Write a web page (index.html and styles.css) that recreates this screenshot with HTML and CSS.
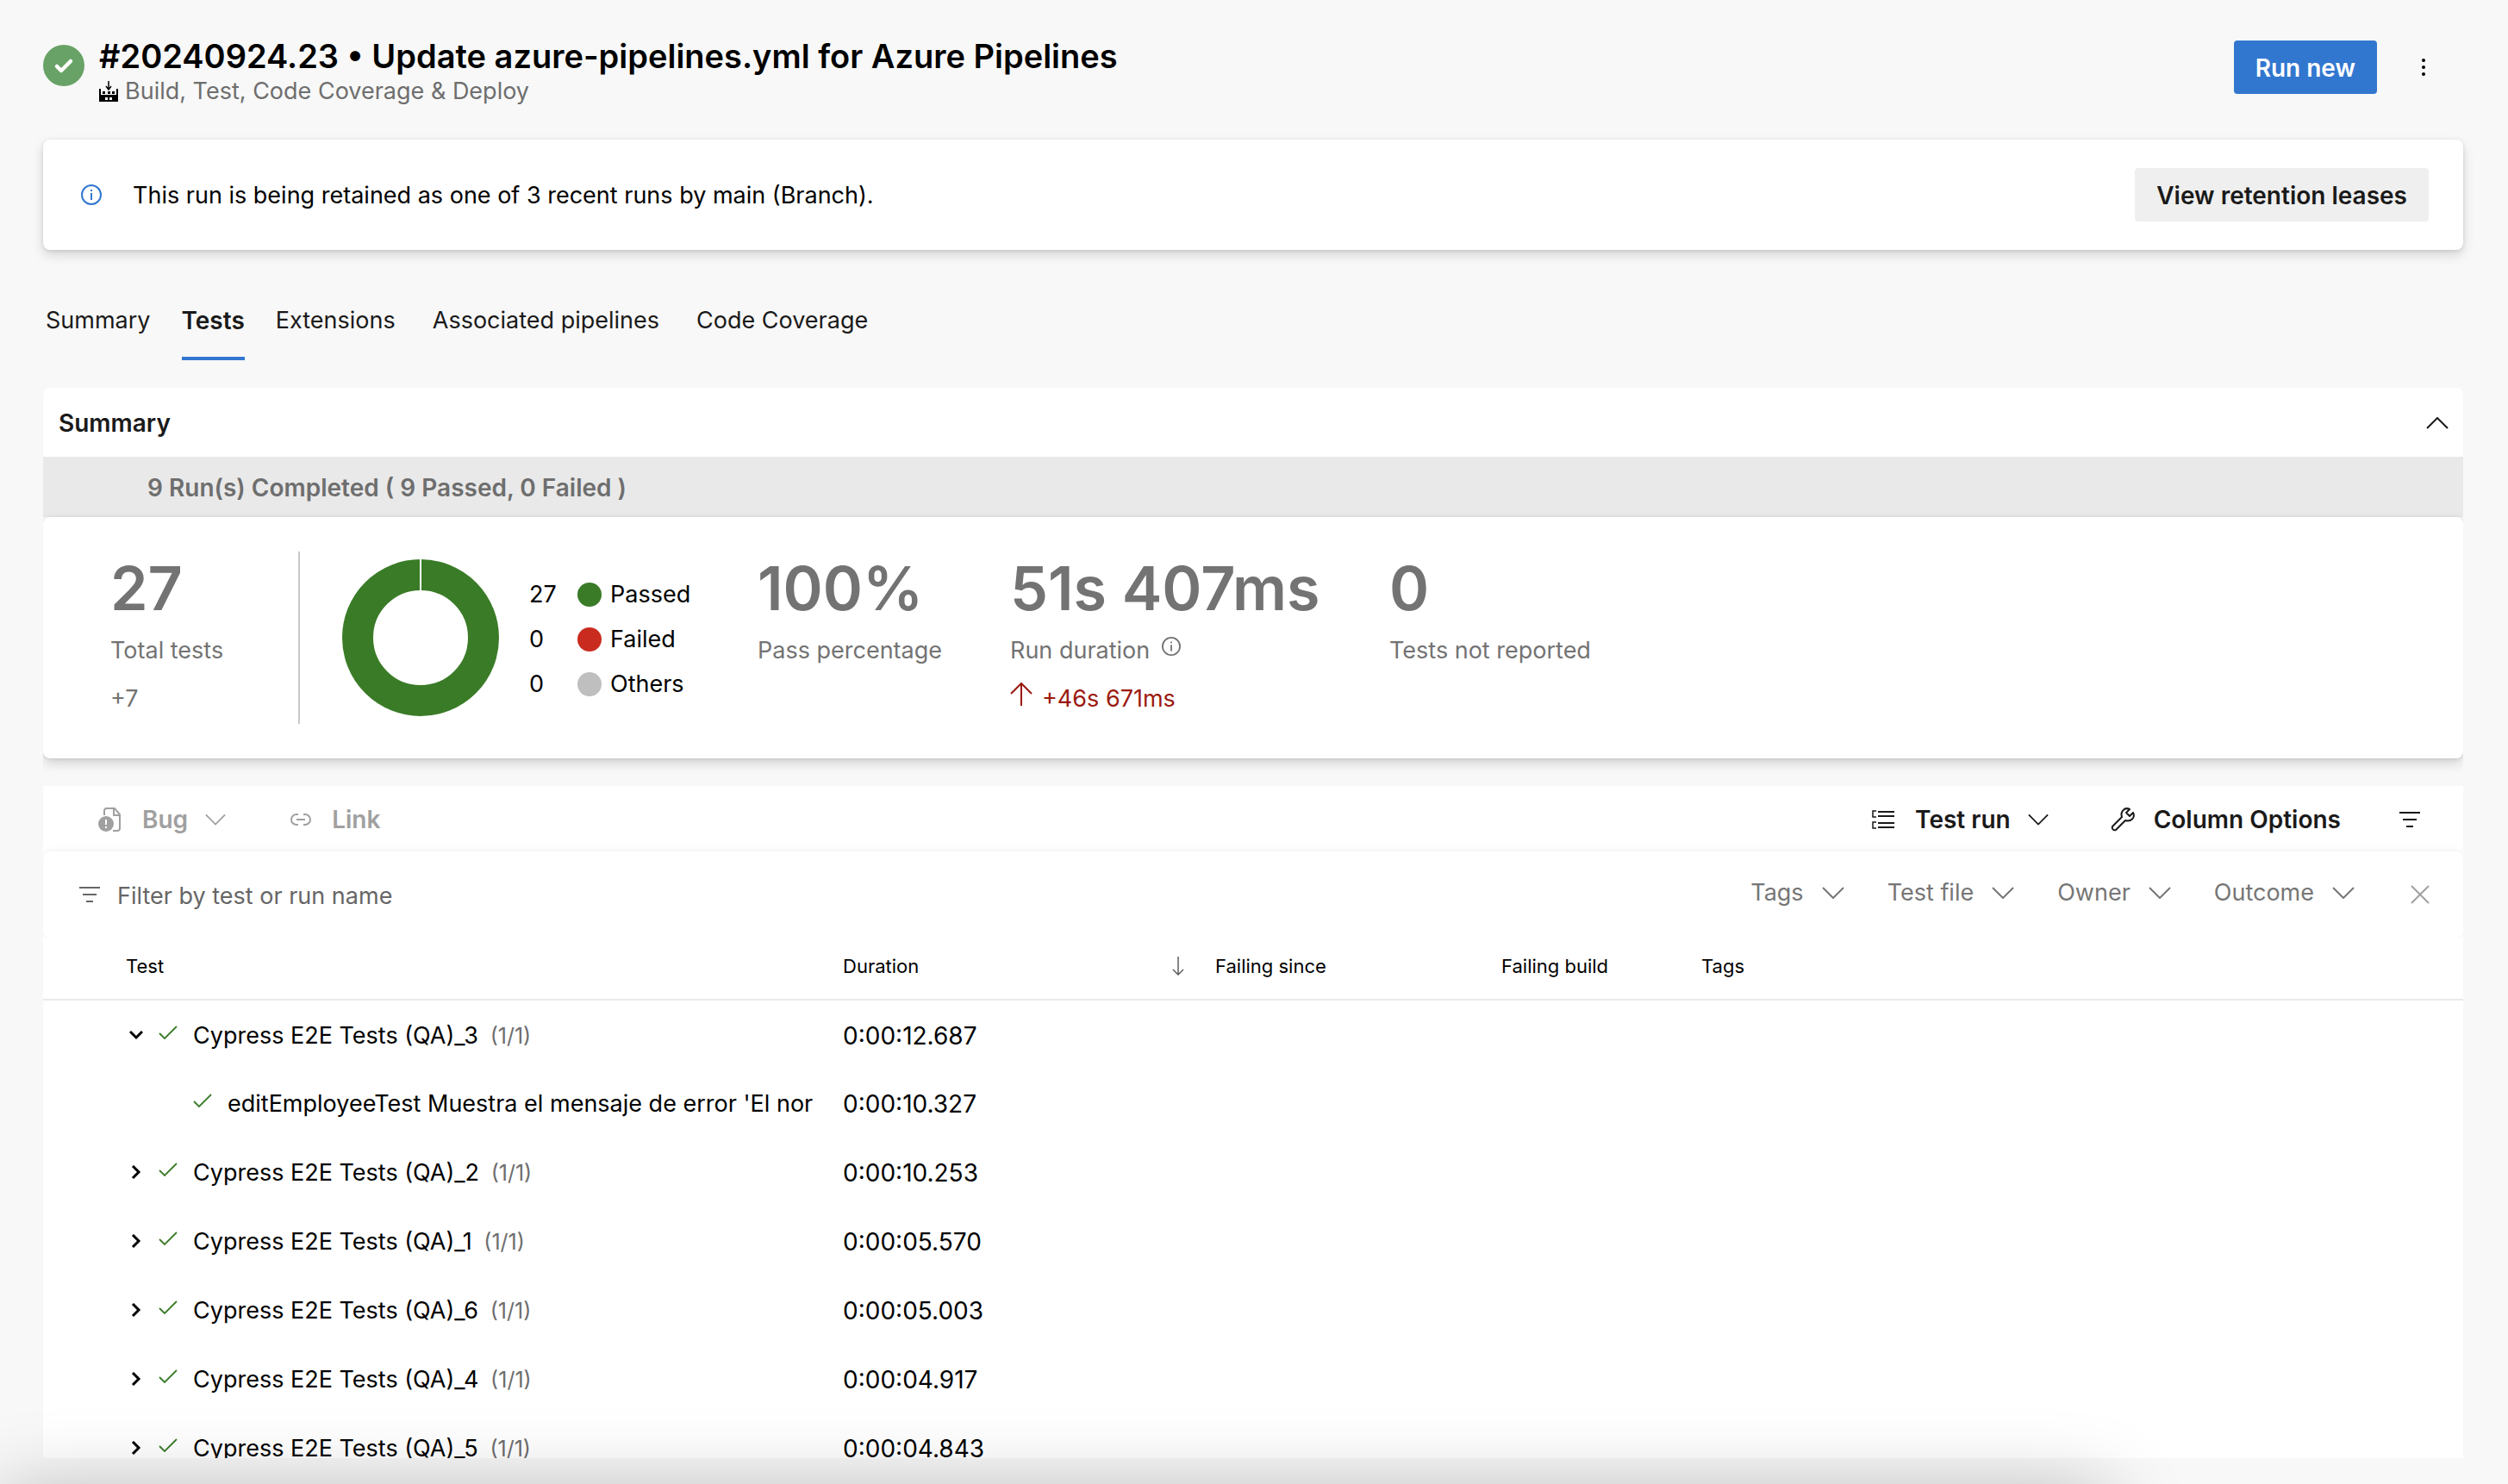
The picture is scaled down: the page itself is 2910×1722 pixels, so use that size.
FILE: index.html
```html
<!DOCTYPE html>
<html lang="en">
<head>
<meta charset="utf-8">
<title>#20240924.23 - Tests</title>
<link rel="stylesheet" href="styles.css">
</head>
<body>
<svg class="defs" aria-hidden="true">
  <defs>
    <symbol id="chev-down" viewBox="0 0 26 14"><path d="M1 1l12 12L25 1" fill="none" stroke="currentColor" stroke-width="2"/></symbol>
    <symbol id="chev-up" viewBox="0 0 26 14"><path d="M1 13L13 1l12 12" fill="none" stroke="currentColor" stroke-width="2"/></symbol>
    <symbol id="caret-right" viewBox="0 0 16 16"><path d="M4 1l7 7-7 7" fill="none" stroke="currentColor" stroke-width="3"/></symbol>
    <symbol id="caret-down" viewBox="0 0 16 16"><path d="M1 4l7 7 7-7" fill="none" stroke="currentColor" stroke-width="3"/></symbol>
    <symbol id="tick" viewBox="0 0 22 16"><path d="M1 9l6 6L21 1" fill="none" stroke="currentColor" stroke-width="1.8"/></symbol>
    <symbol id="info" viewBox="0 0 24 24"><circle cx="12" cy="12" r="11" fill="none" stroke="currentColor" stroke-width="2"/><path d="M12 10v8M12 6v2" stroke="currentColor" stroke-width="2"/></symbol>
    <symbol id="filter" viewBox="0 0 24 20"><path d="M0 2h24M4 10h16M8 18h8" stroke="currentColor" stroke-width="2"/></symbol>
  </defs>
</svg>

<header class="page-head">
  <svg class="status" viewBox="0 0 48 48" role="img" aria-label="Succeeded"><circle cx="24" cy="24" r="24" fill="#68a267"/><path d="M16 25l5 5 11-11" fill="none" stroke="#fff" stroke-width="4.5" stroke-linecap="round" stroke-linejoin="round"/></svg>
  <div class="head-text">
    <h1>#20240924.23 • Update azure-pipelines.yml for Azure Pipelines</h1>
    <p class="pipeline">
      <svg class="factory" viewBox="0 0 22 24" aria-hidden="true"><path d="M11 0v9M8 6l3 4 3-4" fill="none" stroke="#000" stroke-width="1.5"/><path d="M0 9h2v7h18V9h2v15H0zM4 12h3v3H4zM10 12h3v3h-3zM15 12h3v3h-3z" fill="#000"/><path d="M7 19h3v3H7zM12 19h3v3h-3z" fill="#f8f8f8"/></svg>
      <span>Build, Test, Code Coverage &amp; Deploy</span>
    </p>
  </div>
  <button class="btn primary" type="button">Run new</button>
  <button class="more" type="button" aria-label="More actions"><svg viewBox="0 0 4 20"><circle cx="2" cy="2" r="2"/><circle cx="2" cy="10" r="2"/><circle cx="2" cy="18" r="2"/></svg></button>
</header>

<main>
  <section class="card notice">
    <svg class="info-blue" aria-hidden="true"><use href="#info"/></svg>
    <p>This run is being retained as one of 3 recent runs by main (Branch).</p>
    <button class="btn" type="button">View retention leases</button>
  </section>

  <nav class="tabs">
    <a href="#summary">Summary</a>
    <a href="#tests" class="active" aria-current="page">Tests</a>
    <a href="#extensions">Extensions</a>
    <a href="#associated">Associated pipelines</a>
    <a href="#coverage">Code Coverage</a>
  </nav>

  <section class="summary">
    <div class="summary-head">
      <h2>Summary</h2>
      <button class="icon-btn" type="button" aria-label="Collapse summary"><svg class="chev"><use href="#chev-up"/></svg></button>
    </div>
    <div class="runs-bar">9 Run(s) Completed ( 9 Passed, 0 Failed )</div>
    <div class="card stats">
      <div class="stat total">
        <strong>27</strong>
        <span class="label">Total tests</span>
        <span class="delta">+7</span>
      </div>
      <div class="outcome">
        <svg class="donut" viewBox="0 0 182 182" role="img" aria-label="27 of 27 passed"><circle cx="91" cy="91" r="73" fill="none" stroke="#3a7b27" stroke-width="36"/><path d="M91 0v37" stroke="#fff" stroke-width="2"/></svg>
        <ul class="legend">
          <li><span>27</span><i class="dot passed"></i>Passed</li>
          <li><span>0</span><i class="dot failed"></i>Failed</li>
          <li><span>0</span><i class="dot others"></i>Others</li>
        </ul>
      </div>
      <div class="stat percent">
        <strong>100%</strong>
        <span class="label">Pass percentage</span>
      </div>
      <div class="stat duration">
        <strong>51s 407ms</strong>
        <span class="label">Run duration <svg class="info-grey" aria-hidden="true"><use href="#info"/></svg></span>
        <span class="delta worse"><svg viewBox="0 0 26 28" aria-hidden="true"><path d="M13 28V2M1 14L13 2l12 12" fill="none" stroke="currentColor" stroke-width="2"/></svg>+46s 671ms</span>
      </div>
      <div class="stat">
        <strong>0</strong>
        <span class="label">Tests not reported</span>
      </div>
    </div>
  </section>

  <section class="results">
    <div class="toolbar">
      <button class="tool" type="button" disabled>
        <svg class="i-bug" viewBox="0 0 28 28" aria-hidden="true"><path d="M8 9V4q0-3 3-3h9l6 7v16q0 3-3 3h-5M19 1v8h7" fill="none" stroke="currentColor" stroke-width="2"/><circle cx="10" cy="19" r="9" fill="currentColor"/><path d="M10 14v6M10 22v2" stroke="#fff" stroke-width="2"/></svg>
        Bug
        <svg class="chev"><use href="#chev-down"/></svg>
      </button>
      <button class="tool link" type="button" disabled>
        <svg class="i-link" viewBox="0 0 24 14" aria-hidden="true"><path d="M9 1H7a6 6 0 0 0 0 12h2M15 1h2a6 6 0 0 1 0 12h-2M7 7h10" fill="none" stroke="currentColor" stroke-width="2"/></svg>
        Link
      </button>
      <span class="spacer"></span>
      <button class="tool" type="button">
        <svg class="i-group" viewBox="0 0 26 22" aria-hidden="true"><path d="M7 2h19M7 7h19M7 15h19M7 20h19" stroke="currentColor" stroke-width="2"/><path d="M5 1H1v7h4M5 14H1v7h4" fill="none" stroke="currentColor" stroke-width="1.5"/></svg>
        Test run
        <svg class="chev"><use href="#chev-down"/></svg>
      </button>
      <button class="tool columns" type="button">
        <svg class="i-wrench" viewBox="0 0 28 28" aria-hidden="true"><path d="M22 2C16-1 11 5 13 11L2 22a3 3 0 0 0 4 4L17 15c6 2 12-3 9-9l-4 4-4-4z" fill="none" stroke="currentColor" stroke-width="2" stroke-linejoin="round"/></svg>
        Column Options
      </button>
      <button class="icon-btn filter-btn" type="button" aria-label="Toggle filter"><svg class="i-filter"><use href="#filter"/></svg></button>
    </div>

    <div class="filterbar">
      <label class="search" for="q"><svg class="i-filter"><use href="#filter"/></svg></label>
      <input id="q" type="text" placeholder="Filter by test or run name" aria-label="Filter by test or run name">
      <button class="drop" type="button">Tags<svg class="chev"><use href="#chev-down"/></svg></button>
      <button class="drop" type="button">Test file<svg class="chev"><use href="#chev-down"/></svg></button>
      <button class="drop" type="button">Owner<svg class="chev"><use href="#chev-down"/></svg></button>
      <button class="drop" type="button">Outcome<svg class="chev"><use href="#chev-down"/></svg></button>
      <button class="icon-btn clear" type="button" aria-label="Clear filters"><svg viewBox="0 0 22 22"><path d="M1 1l20 20M21 1L1 21" stroke="currentColor" stroke-width="2"/></svg></button>
    </div>

    <div class="table-wrap">
    <table>
      <colgroup><col class="c-test"><col class="c-duration"><col class="c-since"><col class="c-build"><col></colgroup>
      <thead>
        <tr><th>Test</th><th><div class="sorted">Duration<svg viewBox="0 0 14 22" aria-hidden="true"><path d="M7 0v21M1 15l6 6 6-6" fill="none" stroke="currentColor" stroke-width="1.4"/></svg></div></th><th>Failing since</th><th>Failing build</th><th>Tags</th></tr>
      </thead>
      <tbody>
        <tr><td><div class="name"><svg class="caret"><use href="#caret-down"/></svg><svg class="tick"><use href="#tick"/></svg><span>Cypress E2E Tests (QA)_3 <small>(1/1)</small></span></div></td><td>0:00:12.687</td><td></td><td></td><td></td></tr>
        <tr><td><div class="name child"><svg class="tick"><use href="#tick"/></svg><span>editEmployeeTest Muestra el mensaje de error 'El nor</span></div></td><td>0:00:10.327</td><td></td><td></td><td></td></tr>
        <tr><td><div class="name"><svg class="caret"><use href="#caret-right"/></svg><svg class="tick"><use href="#tick"/></svg><span>Cypress E2E Tests (QA)_2 <small>(1/1)</small></span></div></td><td>0:00:10.253</td><td></td><td></td><td></td></tr>
        <tr><td><div class="name"><svg class="caret"><use href="#caret-right"/></svg><svg class="tick"><use href="#tick"/></svg><span>Cypress E2E Tests (QA)_1 <small>(1/1)</small></span></div></td><td>0:00:05.570</td><td></td><td></td><td></td></tr>
        <tr><td><div class="name"><svg class="caret"><use href="#caret-right"/></svg><svg class="tick"><use href="#tick"/></svg><span>Cypress E2E Tests (QA)_6 <small>(1/1)</small></span></div></td><td>0:00:05.003</td><td></td><td></td><td></td></tr>
        <tr><td><div class="name"><svg class="caret"><use href="#caret-right"/></svg><svg class="tick"><use href="#tick"/></svg><span>Cypress E2E Tests (QA)_4 <small>(1/1)</small></span></div></td><td>0:00:04.917</td><td></td><td></td><td></td></tr>
        <tr><td><div class="name"><svg class="caret"><use href="#caret-right"/></svg><svg class="tick"><use href="#tick"/></svg><span>Cypress E2E Tests (QA)_5 <small>(1/1)</small></span></div></td><td>0:00:04.843</td><td></td><td></td><td></td></tr>
      </tbody>
    </table>
    </div>
  </section>
</main>
<div class="edge-shadow" aria-hidden="true"></div>
</body>
</html>
```
FILE: styles.css
```css
* { box-sizing: border-box; }

body {
  margin: 0;
  height: 100vh;
  padding: 40px 52px 30px 50px;
  display: flex;
  flex-direction: column;
  overflow: hidden;
  background: #f8f8f8;
  color: #000;
  font: 27px/40px Inter, "Liberation Sans", sans-serif;
}

h1, h2, p, ul { margin: 0; padding: 0; }
svg { flex: none; overflow: visible; }
.defs { position: absolute; width: 0; height: 0; }

button {
  border: 0;
  padding: 0;
  background: none;
  color: #1a1a1a;
  font: inherit;
}

.page-head {
  display: flex;
  align-items: flex-start;
  height: 122px;
}
.status { width: 48px; height: 48px; margin: 12px 17px 0 0; }
.head-text { flex: 1; }
h1 { font-size: 38px; line-height: 50px; font-weight: 600; }
.pipeline {
  display: flex;
  align-items: center;
  gap: 8px;
  line-height: 32px;
  color: #6e6e6e;
}
.factory { width: 22px; height: 24px; }

.btn {
  height: 62px;
  padding: 2px 25px 0;
  border-radius: 4px;
  background: #efefef;
  font-size: 28px;
  font-weight: 600;
}
.btn.primary { margin-top: 7px; background: #3277cf; color: #fff; }
.more { width: 64px; height: 62px; margin: 7px 14px 0 22px; }
.more svg { width: 4px; height: 20px; display: block; margin: 0 auto; }

main { flex: 1; min-height: 0; display: flex; flex-direction: column; }

.card {
  background: #fff;
  border-radius: 8px;
  box-shadow: 0 6px 14px rgba(0, 0, 0, .14), 0 1px 4px rgba(0, 0, 0, .11);
}

.notice {
  display: flex;
  align-items: center;
  height: 128px;
  flex: none;
  padding: 0 40px 0 44px;
}
.info-blue { width: 24px; height: 24px; color: #3277cf; margin-right: 36px; }
.notice p { flex: 1; padding-top: 2px; }

.tabs { display: flex; gap: 36px; padding: 44px 0 32px 3px; height: 160px; flex: none; }
.tabs a {
  padding-top: 18px;
  border-bottom: 4px solid transparent;
  color: #1a1a1a;
  text-decoration: none;
}
.tabs a:nth-child(n+3) { padding-right: 7px; }
.tabs .active { font-size: 28px; font-weight: 600; border-color: #3277cf; }

/* Clips the stats card's shadow at the section's sides. */
.summary { flex: none; overflow: hidden; padding-bottom: 32px; border-radius: 8px 8px 0 0; }
.summary-head {
  display: flex;
  justify-content: space-between;
  align-items: center;
  height: 80px;
  padding: 2px 17px 0 18px;
  background: #fff;
}
h2 { font-size: 28px; line-height: 40px; font-weight: 600; color: #1a1a1a; }
.chev { width: 26px; height: 14px; }
.icon-btn { display: flex; align-items: center; }
.runs-bar {
  height: 70px;
  padding: 2px 0 0 121px;
  background: #e9e9e9;
  color: #6e6e6e;
  font-size: 28px;
  font-weight: 600;
  line-height: 68px;
}

.stats { display: flex; height: 280px; padding: 40px 78px; }
.stat { display: flex; flex-direction: column; color: #737373; }
.stat strong { font-size: 70px; line-height: 86px; font-weight: 600; }
.stat .label { margin-top: 9px; display: flex; gap: 14px; line-height: 40px; }
.stat .delta { margin-top: 16px; line-height: 40px; }
.total { width: 218px; }
.outcome {
  display: flex;
  align-items: center;
  width: 533px;
  height: 200px;
  padding-left: 49px;
  border-left: 2px solid #c8c8c8;
}
.donut { width: 182px; height: 182px; }
.legend { list-style: none; margin: 4px 0 0 35px; }
.legend li { display: flex; align-items: center; height: 52px; }
.legend span { width: 56px; }
.dot { width: 28px; height: 28px; border-radius: 50%; margin-right: 10px; }
.passed { background: #3a7b27; }
.failed { background: #c92c1f; }
.others { background: #bfbfbf; }
.percent { width: 293px; }
.duration { width: 440px; }
.info-grey { width: 22px; height: 22px; margin-top: 4px; }
.stat .worse { display: flex; gap: 11px; color: #9b1a10; }
.worse svg { width: 26px; height: 28px; }

.results {
  display: flex;
  flex-direction: column;
  flex: 1;
  min-height: 0;
  overflow: hidden;
  background: #fff;
}
.toolbar {
  display: flex;
  align-items: center;
  flex: none;
  height: 76px;
  padding: 2px 50px 0 63px;
}
.tool { display: flex; align-items: center; gap: 24px; font-size: 28px; font-weight: 600; }
.toolbar .chev { width: 24px; margin-left: -4px; }
.tool:disabled { color: #a0a0a0; }
.link { margin-left: 75px; }
.columns { margin-left: 72px; }
.i-bug, .i-wrench { width: 28px; height: 28px; }
.columns { gap: 22px; }
.i-link { width: 24px; height: 14px; }
.i-group { width: 26px; height: 22px; }
.i-filter { width: 24px; height: 20px; }
.spacer { flex: 1; }
.filter-btn { margin-left: 68px; }

.filterbar {
  display: flex;
  align-items: center;
  flex: none;
  height: 100px;
  padding: 0 39px 0 42px;
  background: #fff;
  border-radius: 8px;
  box-shadow: 0 0 8px rgba(0, 0, 0, .08);
  color: #666;
}
.search { display: flex; }
.filterbar input {
  flex: 1;
  min-width: 0;
  height: 60px;
  margin-left: 20px;
  padding: 2px 0 0;
  border: 0;
  background: none;
  font: inherit;
  color: inherit;
}
.filterbar input::placeholder { color: #666; opacity: 1; }
.drop { display: flex; align-items: center; gap: 21px; margin-left: 50px; padding-bottom: 4px; color: #767676; }
.clear { margin-left: 65px; color: #a0a0a0; }
.clear svg { width: 22px; height: 22px; }

.table-wrap { flex: 1; min-height: 0; overflow: hidden; background: #fff; }
table { width: 100%; border-collapse: collapse; table-layout: fixed; }
.c-test { width: 912px; }
.c-duration { width: 432px; }
.c-since { width: 332px; }
.c-build { width: 232px; }
th {
  height: 72px;
  padding: 0 16px 6px;
  border-bottom: 2px solid #e9e9e9;
  font-size: 22px;
  line-height: 32px;
  font-weight: 400;
  text-align: left;
}
th:first-child { padding-left: 96px; }
.sorted { display: flex; justify-content: space-between; align-items: center; padding-right: 4px; }
.sorted svg { width: 14px; height: 22px; color: #555; }
td { height: 80px; padding: 2px 16px 0; font-size: 28px; }
td:first-child { padding: 0 12px 0 100px; font-size: 27px; }
.name { display: flex; align-items: center; white-space: nowrap; }
.name span { min-width: 0; overflow: hidden; padding-top: 2px; }
.caret { width: 16px; height: 16px; margin-right: 18px; }
.tick { width: 22px; height: 16px; margin: 0 18px 6px 0; color: #3a7b27; }
.child { padding-left: 74px; }
small { margin-left: 6px; font-size: 25px; color: #6e6e6e; }

.edge-shadow {
  position: fixed;
  left: 0;
  top: 100%;
  width: 84%;
  height: 200px;
  margin-top: 8px;
  box-shadow: 0 0 90px rgba(0, 0, 0, .26);
  pointer-events: none;
}
```
